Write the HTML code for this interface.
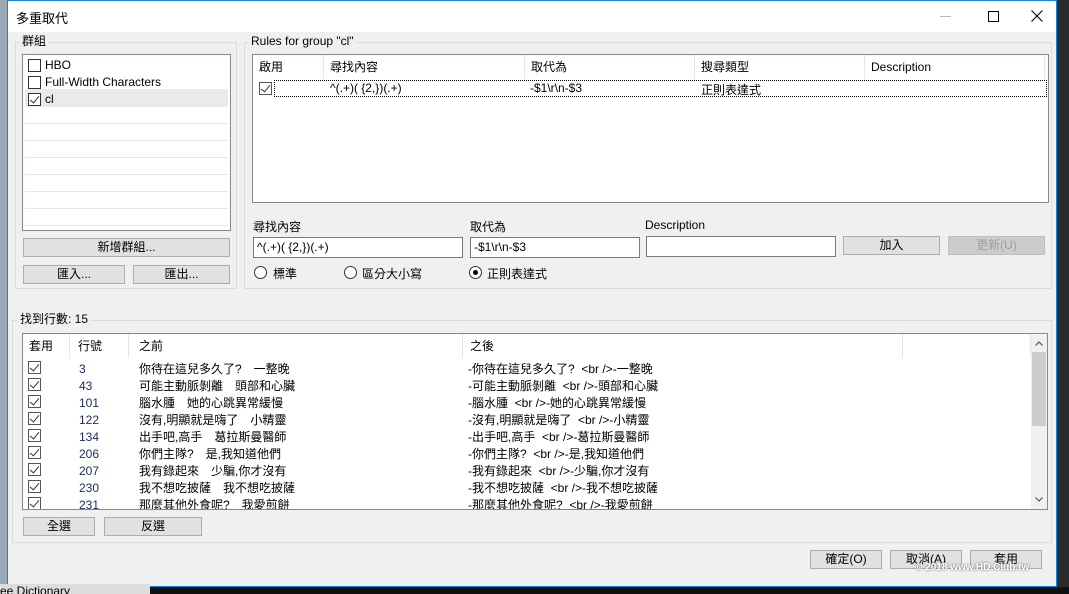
<!DOCTYPE html>
<html><head><meta charset="utf-8">
<style>
*{box-sizing:border-box;margin:0;padding:0}
body{width:1069px;height:594px;overflow:hidden;background:#2b2b2b;position:relative;font-family:"Liberation Sans","Noto Sans CJK TC",sans-serif;font-size:12px;color:#000}
.a{position:absolute}
.win{left:7px;top:0;width:1050px;height:587px;background:#f0f0f0;border:1px solid #1883d7}
.title{left:0;top:0;width:1048px;height:31px;background:#fff}
.gb{border:1px solid #dcdcdc}
.lg{background:#f0f0f0;padding:0 2px;line-height:14px}
.box{background:#fff;border:1px solid #828790}
.btn{background:#e1e1e1;border:1px solid #adadad;text-align:center;line-height:16px}
.inp{background:#fff;border:1px solid #7a7a7a;line-height:18px;padding-left:3px}
.cb{width:13px;height:13px;border:1px solid #333;background:#fff}
.ck::after{content:"";position:absolute;left:3px;top:0px;width:4px;height:8px;border:solid #333;border-width:0 1.5px 1.5px 0;transform:rotate(40deg)}
.rad{width:13px;height:13px;border:1px solid #333;border-radius:50%;background:#fff}
.hd{border-right:1px solid #e5e5e5;height:24px;line-height:24px;padding-left:6px}
.row{height:17px;line-height:17px;white-space:nowrap;position:relative}
.n{color:#1e2a5a}
</style></head><body>
<div class="a" style="left:0;top:0;width:7px;height:594px;background:#9aa8b8"></div>
<div class="a win">
 <div class="a title"><span class="a" style="left:8px;top:7px;font-size:13px">多重取代</span>
  <div class="a" style="left:932px;top:15px;width:11px;height:1px;background:#bbb"></div>
  <div class="a" style="left:980px;top:10px;width:11px;height:11px;border:1px solid #000"></div>
  <svg class="a" style="left:1023px;top:9px" width="12" height="12"><path d="M0.5 0.5L11.5 11.5M11.5 0.5L0.5 11.5" stroke="#000" stroke-width="1.1"/></svg>
 </div>
</div>
<!-- group 1 -->
<div class="a gb" style="left:15px;top:42px;width:222px;height:247px"></div>
<span class="a lg" style="left:20px;top:34px">群組</span>
<div class="a box" style="left:22px;top:54px;width:209px;height:177px">
 <div style="position:absolute;left:2px;top:18px;width:203px;height:156px;background:repeating-linear-gradient(#fff 0 16px,#e8e8e8 16px 17px)"></div>
 <div class="a" style="left:2px;top:34px;width:203px;height:18px;background:#eaeaea"></div>
 <div class="a cb" style="left:5px;top:4px"></div><span class="a" style="left:22px;top:3px">HBO</span>
 <div class="a cb" style="left:5px;top:21px"></div><span class="a" style="left:22px;top:20px">Full-Width Characters</span>
 <div class="a cb ck" style="left:5px;top:38px"></div><span class="a" style="left:22px;top:37px">cl</span>
</div>
<div class="a btn" style="left:23px;top:238px;width:207px;height:19px">新增群組...</div>
<div class="a btn" style="left:23px;top:265px;width:102px;height:19px">匯入...</div>
<div class="a btn" style="left:133px;top:265px;width:97px;height:19px">匯出...</div>
<!-- group 2 -->
<div class="a gb" style="left:244px;top:42px;width:808px;height:247px"></div>
<span class="a lg" style="left:249px;top:34px">Rules for group "cl"</span>
<div class="a box" style="left:252px;top:54px;width:797px;height:149px">
 <div class="a" style="left:0;top:0;display:flex">
  <div class="hd" style="width:71px">啟用</div><div class="hd" style="width:201px">尋找內容</div><div class="hd" style="width:170px">取代為</div><div class="hd" style="width:170px">搜尋類型</div><div class="hd" style="width:180px">Description</div>
 </div>
 <div class="a cb ck" style="left:6px;top:27px;border-color:#555"></div>
 <div class="a" style="left:21px;top:25px;width:773px;height:17px;border:1px dotted #000"></div>
 <span class="a" style="left:77px;top:26px">^(.+)( {2,})(.+)</span>
 <span class="a" style="left:277px;top:26px">-$1\r\n-$3</span>
 <span class="a" style="left:448px;top:26px">正則表達式</span>
</div>
<span class="a" style="left:253px;top:218px">尋找內容</span>
<span class="a" style="left:470px;top:218px">取代為</span>
<span class="a" style="left:645px;top:218px">Description</span>
<div class="a inp" style="left:253px;top:237px;width:210px;height:21px">^(.+)( {2,})(.+)</div>
<div class="a inp" style="left:470px;top:237px;width:170px;height:21px">-$1\r\n-$3</div>
<div class="a inp" style="left:646px;top:236px;width:190px;height:21px"></div>
<div class="a btn" style="left:843px;top:236px;width:97px;height:19px">加入</div>
<div class="a btn" style="left:948px;top:236px;width:97px;height:19px;background:#ccc;border-color:#bfbfbf;color:#a0a0a0">更新(U)</div>
<div class="a rad" style="left:254px;top:266px"></div><span class="a" style="left:273px;top:265px">標準</span>
<div class="a rad" style="left:344px;top:266px"></div><span class="a" style="left:362px;top:265px">區分大小寫</span>
<div class="a rad" style="left:469px;top:266px"><div class="a" style="left:3px;top:3px;width:5px;height:5px;border-radius:50%;background:#000"></div></div><span class="a" style="left:487px;top:265px">正則表達式</span>
<!-- group 3 -->
<div class="a gb" style="left:12px;top:320px;width:1040px;height:223px"></div>
<span class="a lg" style="left:18px;top:312px">找到行數: 15</span>
<div class="a box" style="left:22px;top:333px;width:1026px;height:177px;overflow:hidden">
 <div class="a" style="left:0;top:0;display:flex">
  <div class="hd" style="width:47px">套用</div><div class="hd" style="width:59px;padding-left:8px">行號</div><div class="hd" style="width:334px;padding-left:10px">之前</div><div class="hd" style="width:440px;padding-left:7px">之後</div><div class="hd" style="width:128px"></div>
 </div>
 <div class="a" style="left:1008px;top:1px;width:16px;height:174px;background:#f0f0f0">
  <div class="a" style="left:1px;top:17px;width:14px;height:74px;background:#cdcdcd"></div>
  <svg class="a" style="left:4px;top:6px" width="8" height="5"><path d="M0.5 4.5L4 1L7.5 4.5" stroke="#444" fill="none"/></svg>
  <svg class="a" style="left:4px;top:162px" width="8" height="5"><path d="M0.5 0.5L4 4L7.5 0.5" stroke="#444" fill="none"/></svg>
 </div>
 <div class="a" style="left:4px;top:27px;width:1000px">
  <div class="row"><span class="a cb ck" style="left:1px;border-color:#555"></span><span class="a n" style="left:52px">3</span><span class="a" style="left:112px">你待在這兒多久了?　一整晚</span><span class="a" style="left:441px">-你待在這兒多久了?&nbsp;&nbsp;&lt;br /&gt;-一整晚</span></div>
  <div class="row"><span class="a cb ck" style="left:1px;border-color:#555"></span><span class="a n" style="left:52px">43</span><span class="a" style="left:112px">可能主動脈剝離　頭部和心臟</span><span class="a" style="left:441px">-可能主動脈剝離&nbsp;&nbsp;&lt;br /&gt;-頭部和心臟</span></div>
  <div class="row"><span class="a cb ck" style="left:1px;border-color:#555"></span><span class="a n" style="left:52px">101</span><span class="a" style="left:112px">腦水腫　她的心跳異常緩慢</span><span class="a" style="left:441px">-腦水腫&nbsp;&nbsp;&lt;br /&gt;-她的心跳異常緩慢</span></div>
  <div class="row"><span class="a cb ck" style="left:1px;border-color:#555"></span><span class="a n" style="left:52px">122</span><span class="a" style="left:112px">沒有,明顯就是嗨了　小精靈</span><span class="a" style="left:441px">-沒有,明顯就是嗨了&nbsp;&nbsp;&lt;br /&gt;-小精靈</span></div>
  <div class="row"><span class="a cb ck" style="left:1px;border-color:#555"></span><span class="a n" style="left:52px">134</span><span class="a" style="left:112px">出手吧,高手　葛拉斯曼醫師</span><span class="a" style="left:441px">-出手吧,高手&nbsp;&nbsp;&lt;br /&gt;-葛拉斯曼醫師</span></div>
  <div class="row"><span class="a cb ck" style="left:1px;border-color:#555"></span><span class="a n" style="left:52px">206</span><span class="a" style="left:112px">你們主隊?　是,我知道他們</span><span class="a" style="left:441px">-你們主隊?&nbsp;&nbsp;&lt;br /&gt;-是,我知道他們</span></div>
  <div class="row"><span class="a cb ck" style="left:1px;border-color:#555"></span><span class="a n" style="left:52px">207</span><span class="a" style="left:112px">我有錄起來　少騙,你才沒有</span><span class="a" style="left:441px">-我有錄起來&nbsp;&nbsp;&lt;br /&gt;-少騙,你才沒有</span></div>
  <div class="row"><span class="a cb ck" style="left:1px;border-color:#555"></span><span class="a n" style="left:52px">230</span><span class="a" style="left:112px">我不想吃披薩　我不想吃披薩</span><span class="a" style="left:441px">-我不想吃披薩&nbsp;&nbsp;&lt;br /&gt;-我不想吃披薩</span></div>
  <div class="row"><span class="a cb ck" style="left:1px;border-color:#555"></span><span class="a n" style="left:52px">231</span><span class="a" style="left:112px">那麼其他外食呢?　我愛煎餅</span><span class="a" style="left:441px">-那麼其他外食呢?&nbsp;&nbsp;&lt;br /&gt;-我愛煎餅</span></div>
 </div>
</div>
<div class="a btn" style="left:23px;top:517px;width:72px;height:19px">全選</div>
<div class="a btn" style="left:104px;top:517px;width:98px;height:19px">反選</div>
<div class="a btn" style="left:810px;top:550px;width:72px;height:19px">確定(O)</div>
<div class="a btn" style="left:890px;top:550px;width:72px;height:19px">取消(A)</div>
<div class="a btn" style="left:970px;top:550px;width:72px;height:19px">套用</div>
<span class="a" style="left:915px;top:562px;font-size:10px;color:#fff;font-weight:bold;text-shadow:0 0 2px #555">© 2018 www.HD.Club.tw</span>
<div class="a" style="left:0;top:587px;width:1069px;height:7px;background:#111"></div>
<span class="a" style="left:0;top:584px;font-size:12px;color:#000;background:#ddd;width:150px;height:10px;overflow:hidden;line-height:14px">ee Dictionary</span>
</body></html>
